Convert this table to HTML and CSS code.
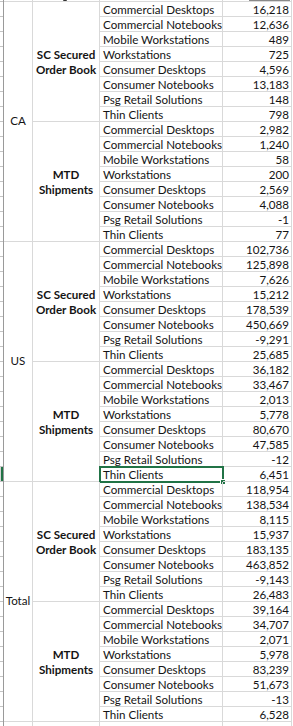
FILE: index.html
```html
<!DOCTYPE html>
<html>
<head>
<meta charset="utf-8">
<link rel="stylesheet" href="styles.css">
</head>
<body>
<div class="sheet">
  <div class="rowheads">
    <div class="rh rh-top"></div>
    <div class="rh"></div><div class="rh"></div><div class="rh"></div><div class="rh"></div>
    <div class="rh"></div><div class="rh"></div><div class="rh"></div><div class="rh"></div>
    <div class="rh"></div><div class="rh"></div><div class="rh"></div><div class="rh"></div>
    <div class="rh"></div><div class="rh"></div><div class="rh"></div><div class="rh"></div>
    <div class="rh"></div><div class="rh"></div><div class="rh"></div><div class="rh"></div>
    <div class="rh"></div><div class="rh"></div><div class="rh"></div><div class="rh"></div>
    <div class="rh"></div><div class="rh"></div><div class="rh"></div><div class="rh"></div>
    <div class="rh"></div><div class="rh"></div><div class="rh"></div><div class="rh rh-sel"></div>
    <div class="rh"></div><div class="rh"></div><div class="rh"></div><div class="rh"></div>
    <div class="rh"></div><div class="rh"></div><div class="rh"></div><div class="rh"></div>
    <div class="rh"></div><div class="rh"></div><div class="rh"></div><div class="rh"></div>
    <div class="rh"></div><div class="rh"></div><div class="rh"></div><div class="rh"></div>
    <div class="rh"></div>
  </div>
  <div class="pivot">
    <div class="c top"></div><div class="c top"><span class="desc"></span></div><div class="c top"></div><div class="c top"><span class="hdrbar"></span></div>

    <div class="c region r16">CA</div>
    <div class="c measure r8"><span>SC Secured</span><span>Order Book</span></div>
    <div class="c name">Commercial Desktops</div><div class="c val">16,218</div>
    <div class="c name">Commercial Notebooks</div><div class="c val">12,636</div>
    <div class="c name">Mobile Workstations</div><div class="c val">489</div>
    <div class="c name">Workstations</div><div class="c val">725</div>
    <div class="c name">Consumer Desktops</div><div class="c val">4,596</div>
    <div class="c name">Consumer Notebooks</div><div class="c val">13,183</div>
    <div class="c name">Psg Retail Solutions</div><div class="c val">148</div>
    <div class="c name">Thin Clients</div><div class="c val">798</div>
    <div class="c measure r8"><span>MTD</span><span>Shipments</span></div>
    <div class="c name">Commercial Desktops</div><div class="c val">2,982</div>
    <div class="c name">Commercial Notebooks</div><div class="c val">1,240</div>
    <div class="c name">Mobile Workstations</div><div class="c val">58</div>
    <div class="c name">Workstations</div><div class="c val">200</div>
    <div class="c name">Consumer Desktops</div><div class="c val">2,569</div>
    <div class="c name">Consumer Notebooks</div><div class="c val">4,088</div>
    <div class="c name">Psg Retail Solutions</div><div class="c val">-1</div>
    <div class="c name">Thin Clients</div><div class="c val">77</div>

    <div class="c region r16">US</div>
    <div class="c measure r8"><span>SC Secured</span><span>Order Book</span></div>
    <div class="c name">Commercial Desktops</div><div class="c val">102,736</div>
    <div class="c name">Commercial Notebooks</div><div class="c val">125,898</div>
    <div class="c name">Mobile Workstations</div><div class="c val">7,626</div>
    <div class="c name">Workstations</div><div class="c val">15,212</div>
    <div class="c name">Consumer Desktops</div><div class="c val">178,539</div>
    <div class="c name">Consumer Notebooks</div><div class="c val">450,669</div>
    <div class="c name">Psg Retail Solutions</div><div class="c val">-9,291</div>
    <div class="c name">Thin Clients</div><div class="c val">25,685</div>
    <div class="c measure r8"><span>MTD</span><span>Shipments</span></div>
    <div class="c name">Commercial Desktops</div><div class="c val">36,182</div>
    <div class="c name">Commercial Notebooks</div><div class="c val">33,467</div>
    <div class="c name">Mobile Workstations</div><div class="c val">2,013</div>
    <div class="c name">Workstations</div><div class="c val">5,778</div>
    <div class="c name">Consumer Desktops</div><div class="c val">80,670</div>
    <div class="c name">Consumer Notebooks</div><div class="c val">47,585</div>
    <div class="c name">Psg Retail Solutions</div><div class="c val">-12</div>
    <div class="c name selected">Thin Clients<span class="selbox"><span class="handle"></span></span></div><div class="c val">6,451</div>

    <div class="c region r16">Total</div>
    <div class="c measure r8"><span>SC Secured</span><span>Order Book</span></div>
    <div class="c name">Commercial Desktops</div><div class="c val">118,954</div>
    <div class="c name">Commercial Notebooks</div><div class="c val">138,534</div>
    <div class="c name">Mobile Workstations</div><div class="c val">8,115</div>
    <div class="c name">Workstations</div><div class="c val">15,937</div>
    <div class="c name">Consumer Desktops</div><div class="c val">183,135</div>
    <div class="c name">Consumer Notebooks</div><div class="c val">463,852</div>
    <div class="c name">Psg Retail Solutions</div><div class="c val">-9,143</div>
    <div class="c name">Thin Clients</div><div class="c val">26,483</div>
    <div class="c measure r8"><span>MTD</span><span>Shipments</span></div>
    <div class="c name">Commercial Desktops</div><div class="c val">39,164</div>
    <div class="c name">Commercial Notebooks</div><div class="c val">34,707</div>
    <div class="c name">Mobile Workstations</div><div class="c val">2,071</div>
    <div class="c name">Workstations</div><div class="c val">5,978</div>
    <div class="c name">Consumer Desktops</div><div class="c val">83,239</div>
    <div class="c name">Consumer Notebooks</div><div class="c val">51,673</div>
    <div class="c name">Psg Retail Solutions</div><div class="c val">-13</div>
    <div class="c name">Thin Clients</div><div class="c val">6,528</div>

    <div class="c blank"></div><div class="c blank"></div><div class="c blank"></div><div class="c blank"></div>
  </div>
</div>
</body>
</html>
```

FILE: styles.css
```css
* { box-sizing: border-box; }
html, body { margin: 0; padding: 0; background: #fff; }
body {
  width: 293px;
  height: 726px;
  overflow: hidden;
  font-family: Lato, "Liberation Sans", sans-serif;
  font-size: 11.6px;
  color: #141414;
}
.sheet { display: flex; align-items: flex-start; }

.rowheads { display: flex; flex-direction: column; width: 4px; border-right: 1px solid #9a9a9a; }
.rh { height: 15px; border-bottom: 1px solid #c4c4c4; }
.rh-top { height: 2px; }
.rh-sel { background: #d6d6d6; box-shadow: inset -2px 0 0 #217346; }

.pivot {
  display: grid;
  grid-template-columns: 29px 67px 123px 69px;
  grid-template-rows: 2px;
  grid-auto-rows: 15px;
}
.c {
  border-right: 1px solid #d9d9d9;
  border-bottom: 1px solid #d9d9d9;
  white-space: nowrap;
  line-height: 14px;
  position: relative;
}
.top { overflow: hidden; }
.desc {
  position: absolute;
  left: 30px; top: 0;
  width: 4px; height: 1px;
  border-bottom: 1px solid #333;
  border-radius: 0 0 2px 2px;
}
.hdrbar { position: absolute; left: 26px; right: 1px; top: 0; height: 1px; background: #8a8a8a; }

.r16 { grid-row: span 16; }
.r8 { grid-row: span 8; }

.region {
  display: flex;
  align-items: center;
  justify-content: center;
  padding-bottom: 1px;
}
.measure {
  display: flex;
  flex-direction: column;
  align-items: center;
  justify-content: center;
  font-weight: 700;
  line-height: 15px;
}
.name { padding-left: 3px; padding-top: 1px; }
.val { text-align: right; padding-right: 2px; padding-top: 1px; }

.selbox {
  position: absolute;
  left: -1px; right: -2px; top: -1px; bottom: -2px;
  border: 2px solid #217346;
}
.handle {
  position: absolute;
  right: -4px; bottom: -4px;
  width: 6px; height: 6px;
  background: #217346;
  border: 1px solid #fff;
}
```
